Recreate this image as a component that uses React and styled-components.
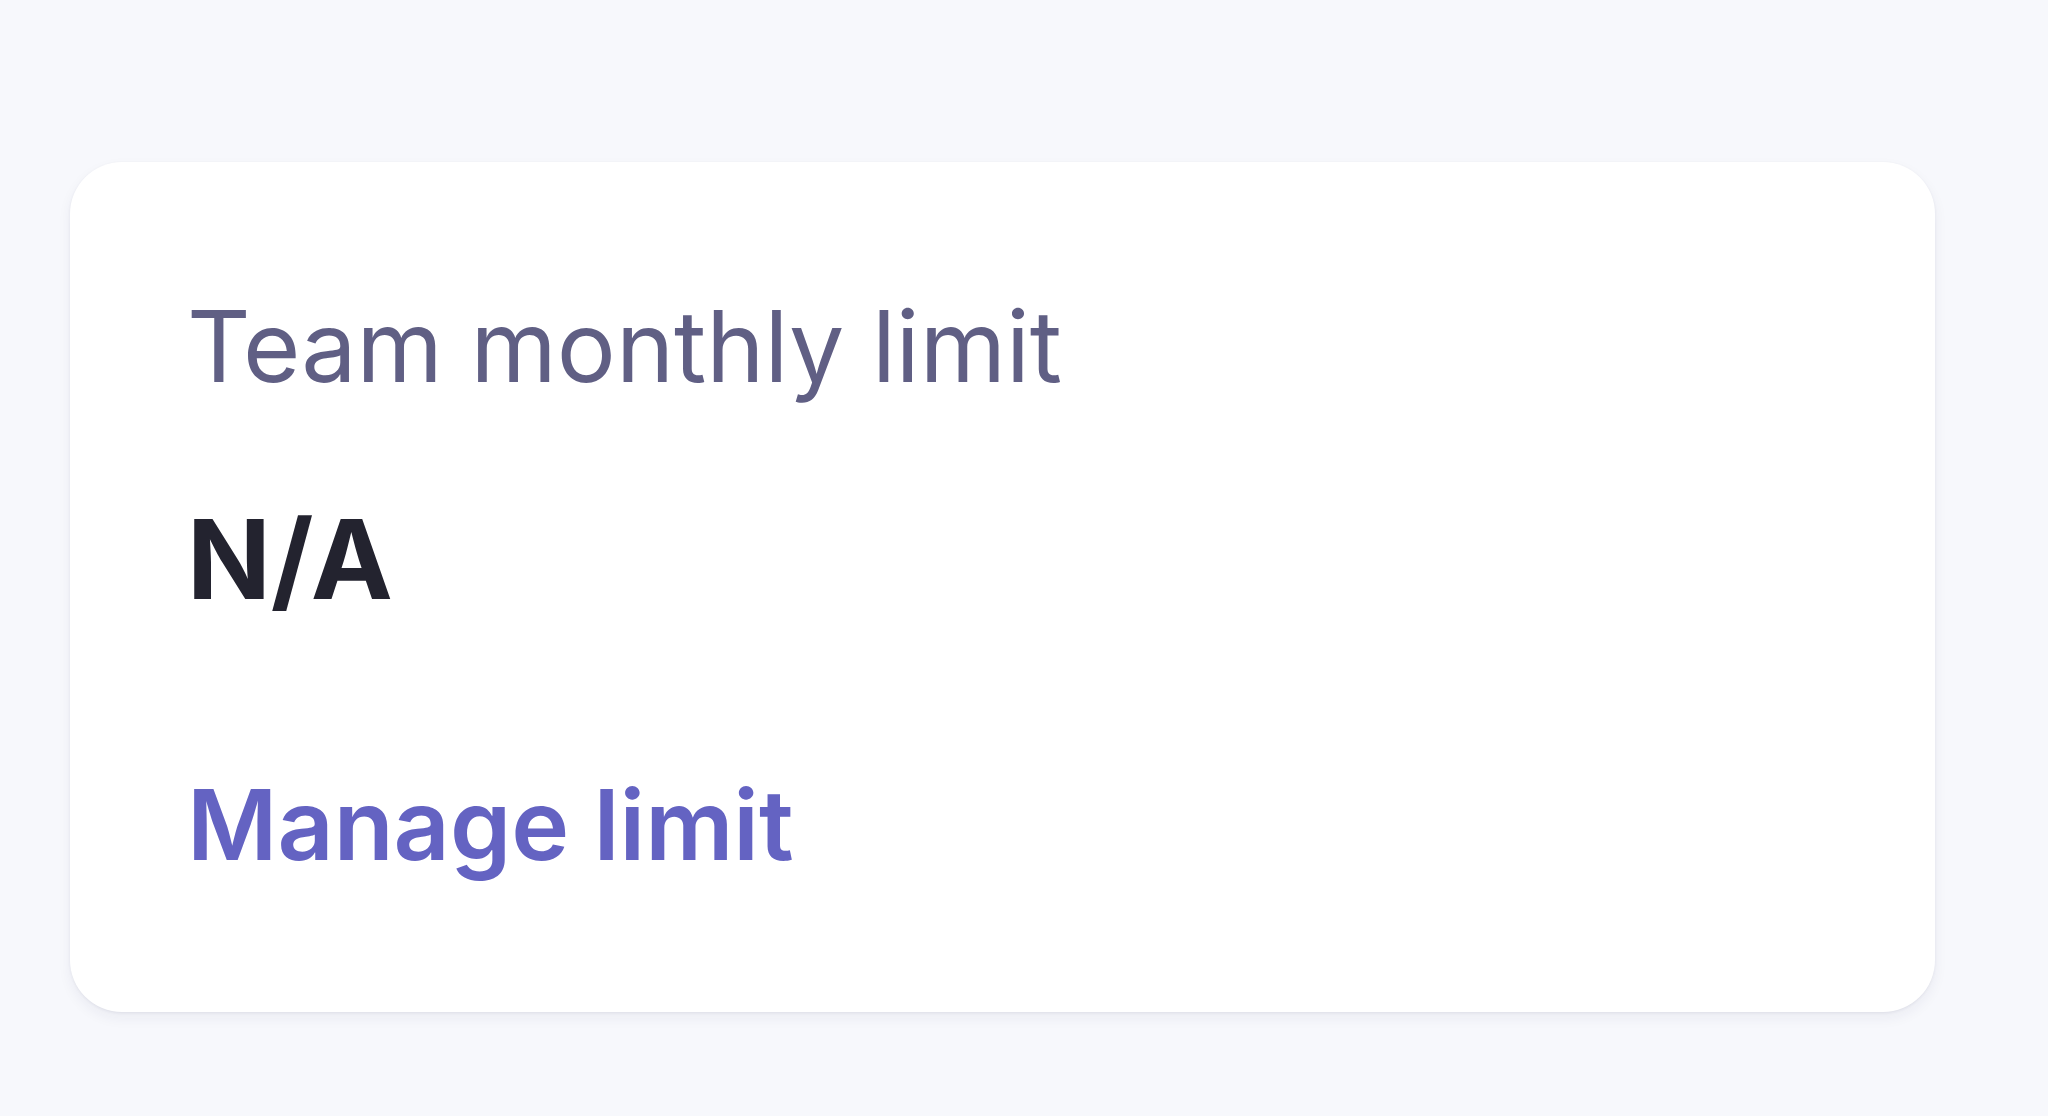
import styled, { createGlobalStyle } from "styled-components";

const GlobalStyle = createGlobalStyle`
  html, body {
    margin: 0;
    background: #f7f8fc;
  }
  body {
    font-family: Inter, "Noto Sans", sans-serif;
    -webkit-font-smoothing: antialiased;
  }
`;

const Page = styled.div`
  min-height: 1116px;
  box-sizing: border-box;
  padding: 162px 113px 0 70px;
`;

const Card = styled.div`
  background: #ffffff;
  border-radius: 52px;
  padding: 136px 117px 138px;
  display: flex;
  flex-direction: column;
  align-items: flex-start;
  box-shadow: 0 6px 14px rgba(40, 40, 90, 0.06), 0 1px 3px rgba(40, 40, 90, 0.07);
`;

const Label = styled.div`
  font-size: 98.5px;
  line-height: 1;
  color: #605f84;
  font-weight: 400;
`;

const Value = styled.div`
  margin-top: 107px;
  font-size: 110px;
  line-height: 1;
  font-weight: 700;
  color: #23232f;
`;

const Link = styled.a`
  margin-top: 162px;
  font-size: 98px;
  line-height: 1;
  font-weight: 600;
  color: #6463c2;
  text-decoration: none;
  cursor: pointer;
`;

const App = () => {
  return (
    <Page>
      <GlobalStyle />
      <Card>
        <Label>Team monthly limit</Label>
        <Value>N/A</Value>
        <Link>Manage limit</Link>
      </Card>
    </Page>
  );
};

export default App;
